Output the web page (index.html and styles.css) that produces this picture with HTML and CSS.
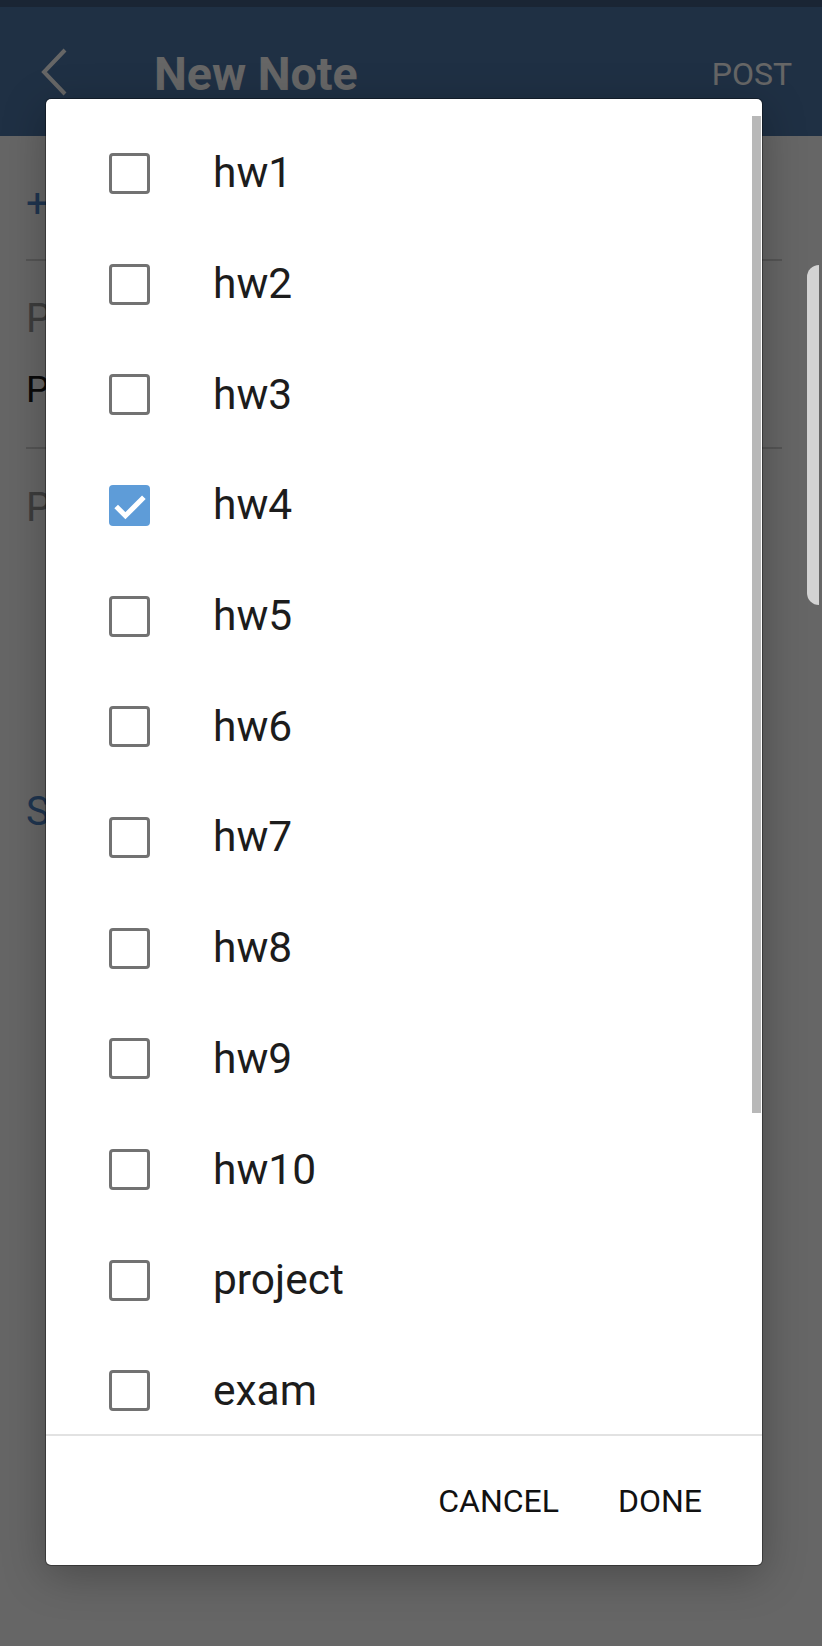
FILE: index.html
```html
<!DOCTYPE html>
<html lang="en">
<head>
<meta charset="utf-8">
<title>New Note</title>
<link rel="stylesheet" href="styles.css">
</head>
<body>
<div class="screen">
  <div class="statusbar"></div>
  <header class="appbar">
    <svg class="back" viewBox="0 0 32 48" width="32" height="48" aria-hidden="true">
      <polyline points="27,2 6,24 27,46" fill="none" stroke="#ffffff" stroke-width="4"/>
    </svg>
    <h1 class="title">New Note</h1>
    <span class="post">POST</span>
  </header>
  <main class="form">
    <div class="add-row">+ Select Folders</div>
    <div class="sep"></div>
    <div class="label">Post To</div>
    <div class="value">Public</div>
    <div class="sep sep-2"></div>
    <div class="label label-2">Post Summary</div>
    <div class="more">Show Options</div>
  </main>
  <div class="scrim"></div>
  <div class="edge-handle"></div>

  <div class="dialog">
    <div class="list">
      <label class="item"><span class="box"></span><span class="name">hw1</span></label>
      <label class="item"><span class="box"></span><span class="name">hw2</span></label>
      <label class="item"><span class="box"></span><span class="name">hw3</span></label>
      <label class="item"><span class="box checked"><svg viewBox="0 0 40 40" width="40" height="40" aria-hidden="true"><polyline points="7,21 16,30 34,12" fill="none" stroke="#ffffff" stroke-width="5"/></svg></span><span class="name">hw4</span></label>
      <label class="item"><span class="box"></span><span class="name">hw5</span></label>
      <label class="item"><span class="box"></span><span class="name">hw6</span></label>
      <label class="item"><span class="box"></span><span class="name">hw7</span></label>
      <label class="item"><span class="box"></span><span class="name">hw8</span></label>
      <label class="item"><span class="box"></span><span class="name">hw9</span></label>
      <label class="item"><span class="box"></span><span class="name">hw10</span></label>
      <label class="item"><span class="box"></span><span class="name">project</span></label>
      <label class="item"><span class="box"></span><span class="name">exam</span></label>
    </div>
    <div class="scrollbar"></div>
    <div class="footer">
      <span class="btn">CANCEL</span>
      <span class="btn">DONE</span>
    </div>
  </div>
</div>
</body>
</html>
```
FILE: styles.css
```css
* { box-sizing: border-box; }

html, body {
  margin: 0;
  padding: 0;
}

body {
  width: 822px;
  height: 1646px;
  overflow: hidden;
  background: #ffffff;
  font-family: Roboto, "Noto Sans", "Liberation Sans", sans-serif;
}

.screen {
  position: relative;
  width: 822px;
  height: 1646px;
  overflow: hidden;
  background: #ffffff;
}

.statusbar {
  height: 7px;
  background: #425c82;
}

.appbar {
  height: 129px;
  background: #4e78aa;
  display: flex;
  align-items: center;
  padding: 0 30px 0 38px;
  color: #ffffff;
}

.back {
  display: block;
  flex: none;
}

.title {
  margin: 0 0 0 84px;
  font-size: 46.5px;
  font-weight: 700;
  line-height: 52px;
  flex: 1;
  position: relative;
  top: 2px;
}

.post {
  font-size: 32px;
  line-height: 40px;
  position: relative;
  top: 2px;
}

.form {
  padding: 0 40px 0 26px;
}

.add-row {
  margin-top: 44px;
  font-size: 40px;
  line-height: 48px;
  color: #4e85c8;
}

.sep {
  height: 2px;
  background: #d4d4d4;
  margin-top: 31px;
}

.sep-2 {
  margin-top: 35px;
}

.label {
  margin-top: 34px;
  font-size: 40px;
  line-height: 48px;
  color: #999999;
}

.label-2 {
  margin-top: 35px;
}

.value {
  margin-top: 25px;
  font-size: 37px;
  line-height: 44px;
  color: #1a1a1a;
}

.more {
  margin-top: 256px;
  font-size: 40px;
  line-height: 48px;
  color: #4e85c8;
}

.scrim {
  position: absolute;
  inset: 0;
  background: rgba(0, 0, 0, 0.6);
}

.edge-handle {
  position: absolute;
  left: 807px;
  top: 265px;
  width: 12px;
  height: 340px;
  background: #d3d3d3;
  border-radius: 12px 0 0 12px;
}

.dialog {
  position: absolute;
  left: 46px;
  top: 99px;
  width: 716px;
  height: 1466px;
  background: #ffffff;
  border-radius: 5px;
  box-shadow: 0 0 0 1px rgba(0, 0, 0, 0.35), 0 10px 44px rgba(0, 0, 0, 0.28);
  display: flex;
  flex-direction: column;
  overflow: hidden;
}

.list {
  height: 1335px;
  flex: none;
  overflow: hidden;
  padding-top: 19px;
}

.item {
  height: 110.7px;
  display: flex;
  align-items: center;
  gap: 63px;
  padding-left: 63px;
}

.box {
  width: 41px;
  height: 41px;
  flex: none;
  border: 3.5px solid #727272;
  border-radius: 4px;
  display: block;
}

.box.checked {
  border: none;
  background: #5e9cd8;
}

.box.checked svg {
  display: block;
  width: 41px;
  height: 41px;
}

.name {
  font-size: 42.5px;
  line-height: 52px;
  color: #1c1c1c;
}

.scrollbar {
  position: absolute;
  right: 1px;
  top: 17px;
  width: 9px;
  height: 997px;
  background: #b8b8b8;
}

.footer {
  flex: 1;
  border-top: 2px solid #e2e2e2;
  display: flex;
  justify-content: flex-end;
  align-items: center;
  gap: 59px;
  padding-right: 60px;
}

.btn {
  font-size: 32px;
  line-height: 40px;
  color: #111111;
}
```
